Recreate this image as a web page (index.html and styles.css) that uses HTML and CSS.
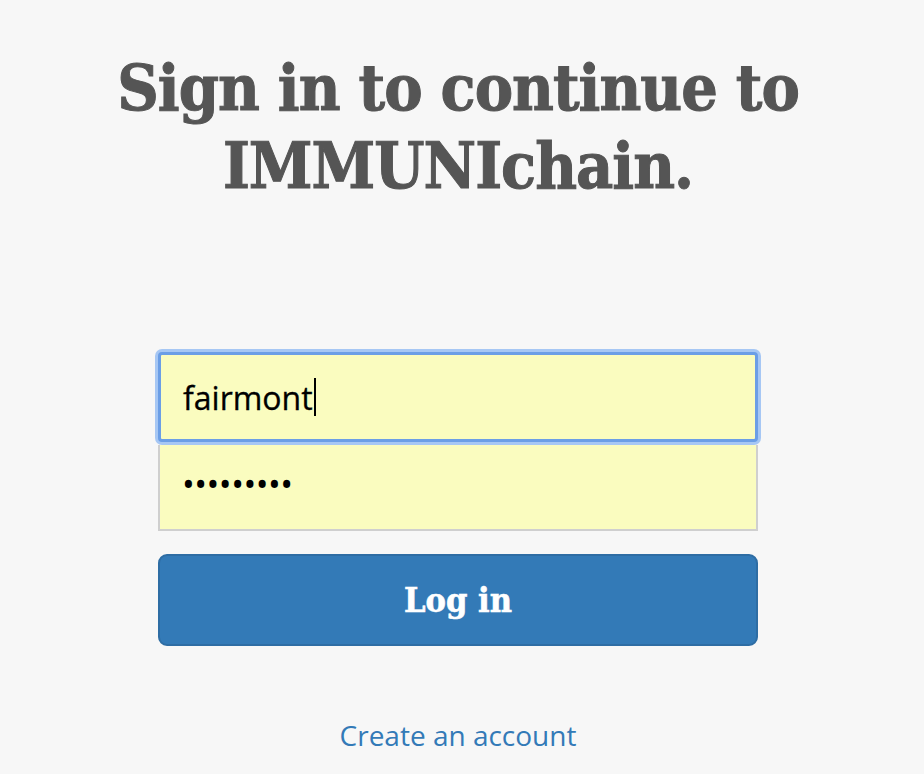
FILE: index.html
```html
<!DOCTYPE html>
<html>
<head>
<meta charset="utf-8">
<link rel="stylesheet" href="styles.css">
</head>
<body>
<main class="signin">
  <h1 class="title">Sign in to continue to IMMUNIchain.</h1>
  <form class="form">
    <div class="field field-focus"><span class="value">fairmont</span><span class="caret"></span></div>
    <div class="field field-pass"><span class="dots">•••••••••</span></div>
    <button type="button" class="btn">Log in</button>
  </form>
  <a class="link" href="#">Create an account</a>
</main>
</body>
</html>
```
FILE: styles.css
```css
html, body {
  margin: 0;
  padding: 0;
  background: #f7f7f7;
}
body {
  padding-right: 8px;
}
.signin {
  width: 600px;
  margin: 0 auto;
  display: flex;
  flex-direction: column;
  align-items: stretch;
}
.title {
  margin: 49px -80px 0;
  text-align: center;
  font-family: "DejaVu Serif", serif;
  font-stretch: condensed;
  font-weight: bold;
  font-size: 64px;
  line-height: 78px;
  letter-spacing: -1px;
  color: #555555;
  -webkit-text-stroke: 1px #555555;
}
.form {
  margin-top: 147px;
  display: flex;
  flex-direction: column;
}
.field {
  height: 84px;
  box-sizing: border-box;
  background: #fafcbf;
  border: 2px solid #cfcfcf;
  display: flex;
  align-items: center;
  padding-left: 22px;
  font-family: "Open Sans", sans-serif;
  font-size: 32px;
  color: #000;
}
.value {
  -webkit-text-stroke: 0.3px #000;
}
.field-focus {
  height: 90px;
  border: 3px solid #6b9ee6;
  border-radius: 4px;
  box-shadow: 0 0 0 3px #a6c7f4;
  position: relative;
  z-index: 1;
}
.caret {
  display: inline-block;
  width: 2px;
  height: 38px;
  background: #000;
  margin-left: 1px;
}
.field-pass {
  margin-top: 3px;
  border-top: none;
  height: 86px;
  padding-bottom: 6px;
}
.dots {
  font-size: 34px;
  letter-spacing: -0.5px;
}
.btn {
  margin-top: 23px;
  height: 92px;
  border: 2px solid #2e6da4;
  border-radius: 9px;
  background: #337ab7;
  color: #fff;
  font-family: "DejaVu Serif", serif;
  font-stretch: condensed;
  font-weight: bold;
  font-size: 34px;
  padding: 0;
  -webkit-text-stroke: 0.6px #ffffff;
}
.link {
  margin-top: 70px;
  align-self: center;
  font-family: "Open Sans", sans-serif;
  font-size: 28px;
  color: #337ab7;
  text-decoration: none;
}
```
